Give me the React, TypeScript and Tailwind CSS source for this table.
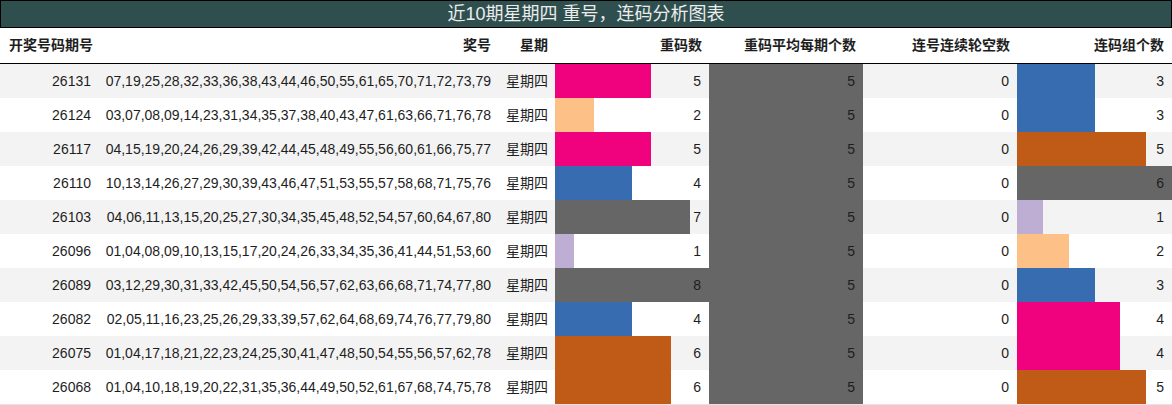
import React from 'react';

type Row = {
    issue: number;
    numbers: string;
    repeat: number;
    avg: number;
    gap: number;
    groups: number;
};

const rows: Row[] = [
    { issue: 26131, numbers: '07,19,25,28,32,33,36,38,43,44,46,50,55,61,65,70,71,72,73,79', repeat: 5, avg: 5, gap: 0, groups: 3 },
    { issue: 26124, numbers: '03,07,08,09,14,23,31,34,35,37,38,40,43,47,61,63,66,71,76,78', repeat: 2, avg: 5, gap: 0, groups: 3 },
    { issue: 26117, numbers: '04,15,19,20,24,26,29,39,42,44,45,48,49,55,56,60,61,66,75,77', repeat: 5, avg: 5, gap: 0, groups: 5 },
    { issue: 26110, numbers: '10,13,14,26,27,29,30,39,43,46,47,51,53,55,57,58,68,71,75,76', repeat: 4, avg: 5, gap: 0, groups: 6 },
    { issue: 26103, numbers: '04,06,11,13,15,20,25,27,30,34,35,45,48,52,54,57,60,64,67,80', repeat: 7, avg: 5, gap: 0, groups: 1 },
    { issue: 26096, numbers: '01,04,08,09,10,13,15,17,20,24,26,33,34,35,36,41,44,51,53,60', repeat: 1, avg: 5, gap: 0, groups: 2 },
    { issue: 26089, numbers: '03,12,29,30,31,33,42,45,50,54,56,57,62,63,66,68,71,74,77,80', repeat: 8, avg: 5, gap: 0, groups: 3 },
    { issue: 26082, numbers: '02,05,11,16,23,25,26,29,33,39,57,62,64,68,69,74,76,77,79,80', repeat: 4, avg: 5, gap: 0, groups: 4 },
    { issue: 26075, numbers: '01,04,17,18,21,22,23,24,25,30,41,47,48,50,54,55,56,57,62,78', repeat: 6, avg: 5, gap: 0, groups: 4 },
    { issue: 26068, numbers: '01,04,10,18,19,20,22,31,35,36,44,49,50,52,61,67,68,74,75,78', repeat: 6, avg: 5, gap: 0, groups: 5 },
];

// colours the chart gives each value, column by column
const repeatColor: Record<number, string> = {
    1: '#beaed4',
    2: '#fdc086',
    4: '#386cb0',
    5: '#f0027f',
    6: '#bf5b17',
    7: '#666666',
    8: '#666666',
};

const groupColor: Record<number, string> = {
    1: '#beaed4',
    2: '#fdc086',
    3: '#386cb0',
    4: '#f0027f',
    5: '#bf5b17',
    6: '#666666',
};

const BarCell: React.FC<{ value: number; max: number; color: string; width: string }> = ({ value, max, color, width }) => (
    <div className={`relative flex h-full items-center justify-end pr-2 ${width}`}>
        {value > 0 && (
            <div
                className="absolute left-0 top-0 h-full"
                style={{ width: `${(value / max) * 100}%`, backgroundColor: color }}
            />
        )}
        <span className="relative">{value}</span>
    </div>
);

const App: React.FC = () => {
    return (
        <div
            className="w-[1172px] bg-white text-[14px] text-[#1e1e1e]"
            style={{ fontFamily: '"Liberation Sans", "Noto Sans CJK SC", sans-serif' }}
        >
            {/* Title bar */}
            <div className="flex h-[28px] items-center justify-center border border-black bg-[#2f4f4f] text-[18px] text-[#ececec]">
                近10期星期四 重号，连码分析图表
            </div>

            {/* Header */}
            <div className="flex h-[36px] items-center border-b border-black font-bold">
                <div className="w-[99px] pl-[9px]">开奖号码期号</div>
                <div className="w-[401px] pr-[9px] text-right">奖号</div>
                <div className="w-[55px] pr-[7px] text-right">星期</div>
                <div className="w-[154px] pr-[7px] text-right">重码数</div>
                <div className="w-[154px] pr-[7px] text-right">重码平均每期个数</div>
                <div className="w-[154px] pr-[7px] text-right">连号连续轮空数</div>
                <div className="w-[155px] pr-[8px] text-right">连码组个数</div>
            </div>

            {/* Rows */}
            <div className="border-b border-[#e4e4e4]">
                {rows.map((row, index) => (
                    <div
                        key={row.issue}
                        className={`flex h-[34px] items-center ${index % 2 === 0 ? 'bg-[#f3f3f3]' : 'bg-white'}`}
                    >
                        <div className="w-[99px] pr-[8px] text-right">{row.issue}</div>
                        <div className="w-[401px] pr-[9px] text-right">{row.numbers}</div>
                        <div className="w-[55px] pr-[7px] text-right">星期四</div>
                        <BarCell value={row.repeat} max={8} color={repeatColor[row.repeat]} width="w-[154px]" />
                        <BarCell value={row.avg} max={5} color="#666666" width="w-[154px]" />
                        <BarCell value={row.gap} max={1} color="#666666" width="w-[154px]" />
                        <BarCell value={row.groups} max={6} color={groupColor[row.groups]} width="w-[155px]" />
                    </div>
                ))}
            </div>
        </div>
    );
};

export default App;
